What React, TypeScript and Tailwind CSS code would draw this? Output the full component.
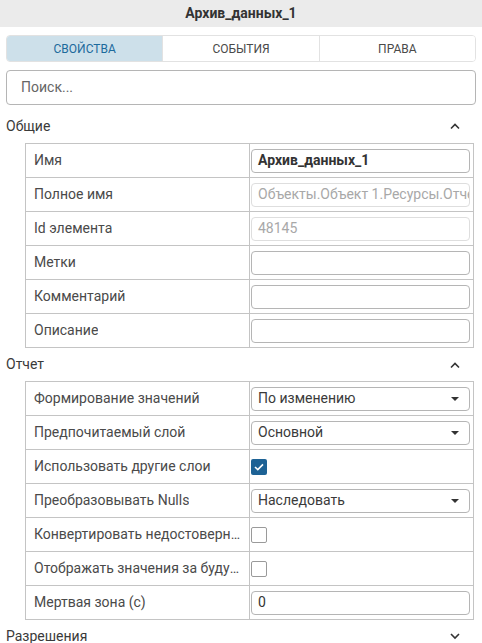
import { useState } from "react";

type Row = {
  label: string;
  kind: "text" | "select" | "check";
  value?: string;
  bold?: boolean;
  disabled?: boolean;
  checked?: boolean;
};

const common: Row[] = [
  { label: "Имя", kind: "text", value: "Архив_данных_1", bold: true },
  { label: "Полное имя", kind: "text", value: "Объекты.Объект 1.Ресурсы.Отчеты.Архив_данных_1", disabled: true },
  { label: "Id элемента", kind: "text", value: "48145", disabled: true },
  { label: "Метки", kind: "text", value: "" },
  { label: "Комментарий", kind: "text", value: "" },
  { label: "Описание", kind: "text", value: "" },
];

const report: Row[] = [
  { label: "Формирование значений", kind: "select", value: "По изменению" },
  { label: "Предпочитаемый слой", kind: "select", value: "Основной" },
  { label: "Использовать другие слои", kind: "check", checked: true },
  { label: "Преобразовывать Nulls", kind: "select", value: "Наследовать" },
  { label: "Конвертировать недостоверные значения", kind: "check" },
  { label: "Отображать значения за будущее время", kind: "check" },
  { label: "Мертвая зона (с)", kind: "text", value: "0" },
];

function Chevron({ up }: { up: boolean }) {
  return (
    <svg width="12" height="8" viewBox="0 0 12 8" className="text-[#333]">
      <path
        d={up ? "M2 6.5 L6 2.5 L10 6.5" : "M2 2 L6 6 L10 2"}
        fill="none"
        stroke="currentColor"
        strokeWidth="1.6"
      />
    </svg>
  );
}

function SectionHeader({ title, open, onToggle, h }: { title: string; open: boolean; onToggle: () => void; h: string }) {
  return (
    <div onClick={onToggle} className={`flex items-center justify-between pl-[6px] pr-[21px] ${h} cursor-pointer`}>
      <span className="text-[14px] text-[#3a3a3a]">{title}</span>
      <Chevron up={open} />
    </div>
  );
}

function Cell({ row }: { row: Row }) {
  if (row.kind === "check") {
    return row.checked ? (
      <div className="w-[16px] h-[16px] rounded-[2px] bg-[#1d6295] flex items-center justify-center">
        <svg width="10" height="8" viewBox="0 0 10 8">
          <path d="M1 4 L3.8 6.6 L9 1.4" fill="none" stroke="white" strokeWidth="1.6" />
        </svg>
      </div>
    ) : (
      <div className="w-[16px] h-[16px] rounded-[2px] border border-[#9a9a9a] bg-white" />
    );
  }
  if (row.kind === "select") {
    return (
      <div className="flex-1 h-[24px] rounded-[4px] border border-[#b5b5b5] flex items-center justify-between pl-[6px] pr-[10px]">
        <span className="text-[14px] text-[#3a3a3a]">{row.value}</span>
        <svg width="8" height="4" viewBox="0 0 8 4">
          <path d="M0 0 L8 0 L4 4 Z" fill="#333" />
        </svg>
      </div>
    );
  }
  return (
    <div
      className={`flex-1 min-w-0 h-[24px] rounded-[4px] border flex items-center px-[6px] overflow-hidden ${
        row.disabled ? "border-[#dedede]" : "border-[#b5b5b5]"
      }`}
    >
      <span
        className={`text-[14px] whitespace-nowrap ${
          row.disabled ? "text-[#a8a8a8]" : "text-[#333]"
        } ${row.bold ? "font-bold" : ""}`}
      >
        {row.value}
      </span>
    </div>
  );
}

function PropTable({ rows }: { rows: Row[] }) {
  return (
    <div className="ml-[25px] mr-[8px] border-l border-t border-[#c4c4c4]">
      {rows.map((r) => (
        <div key={r.label} className="flex h-[34px] border-b border-r border-[#c4c4c4]">
          <div className="w-[224px] shrink-0 border-r border-[#c4c4c4] flex items-center pl-[8px] pr-[4px] overflow-hidden">
            <span className="text-[14px] text-[#4a4a4a] whitespace-nowrap overflow-hidden text-ellipsis">{r.label}</span>
          </div>
          <div className="flex-1 min-w-0 flex items-center pl-[1px] pr-[3px]">
            <Cell row={r} />
          </div>
        </div>
      ))}
    </div>
  );
}

export default function App() {
  const [tab, setTab] = useState(0);
  const [open, setOpen] = useState({ common: true, report: true, perms: false });
  const tabs = ["Свойства", "События", "Права"];

  return (
    <div className="w-[482px] h-[643px] overflow-hidden bg-white font-['Roboto','Liberation_Sans',sans-serif]">
      <div className="h-[27px] bg-[#ebebeb] flex items-center justify-center">
        <span className="text-[14px] font-bold text-[#333]">Архив_данных_1</span>
      </div>

      <div className="mx-[6px] mt-[8px] h-[27px] flex rounded-[4px] border border-[#e2e2e2] overflow-hidden">
        {tabs.map((t, i) => (
          <button
            key={t}
            onClick={() => setTab(i)}
            className={`flex-1 text-[12px] uppercase ${i > 0 ? "border-l border-[#e2e2e2]" : ""} ${
              tab === i ? "bg-[#cde0ea] text-[#1c6a9c]" : "bg-white text-[#4a4a4a]"
            }`}
          >
            {t}
          </button>
        ))}
      </div>

      <div className="mx-[6px] mt-[8px] h-[35px] rounded-[4px] border border-[#b5b5b5] flex items-center px-[14px]">
        <input
          placeholder="Поиск..."
          className="w-full outline-none text-[14px] text-[#333] placeholder:text-[#666]"
        />
      </div>

      <SectionHeader title="Общие" open={open.common} h="h-[38px] pt-[4px]" onToggle={() => setOpen({ ...open, common: !open.common })} />
      {open.common && <PropTable rows={common} />}

      <SectionHeader title="Отчет" open={open.report} h="h-[33px]" onToggle={() => setOpen({ ...open, report: !open.report })} />
      {open.report && <PropTable rows={report} />}

      <SectionHeader title="Разрешения" open={open.perms} h="h-[32px]" onToggle={() => setOpen({ ...open, perms: !open.perms })} />
    </div>
  );
}
